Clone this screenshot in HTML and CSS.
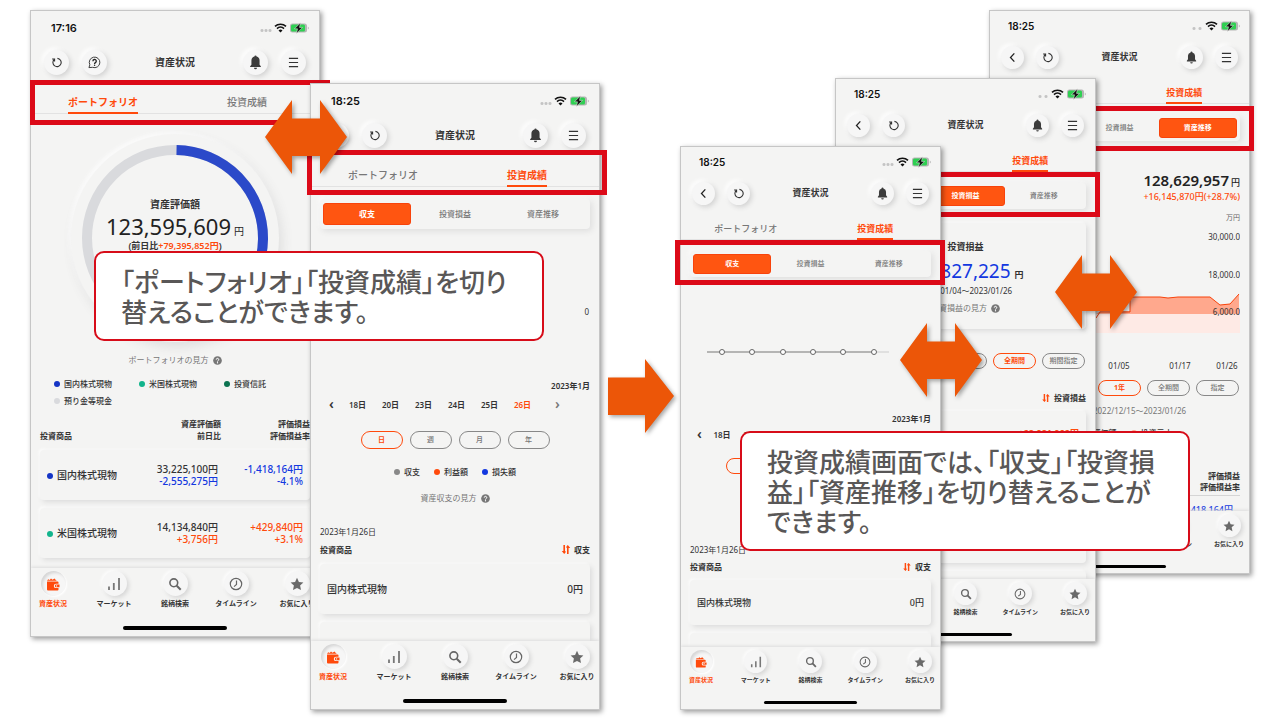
FILE: index.html
```
<!DOCTYPE html>
<html lang="ja">
<head>
  <meta charset="UTF-8">
  <meta name="viewport" content="width=device-width, initial-scale=1">
  <title>資産状況</title>
  <link rel="stylesheet" href="styles.css">
</head>

<body>
  <!-- icons -->
  <svg class="sprite" aria-hidden="true">
    <symbol id="status" viewBox="0 0 50 12">
      <path d="M16 4.400a8 8 0 0 1 11 0M18 6.600a5 5 0 0 1 7 0" fill="none" stroke="#111" stroke-width="1.600"/>
      <path d="M21.500 10.500l-2-2.100a2.800 2.800 0 0 1 4 0z" fill="#111"/>
      <rect x="31" y="1.500" width="17" height="9" rx="2.500" fill="#b5b5b5"/>
      <rect x="32" y="2.500" width="14" height="7" rx="1.500" fill="#2fd052"/>
      <path d="M48.800 4.600v3q1-.5 1-1.500t-1-1.500z" fill="#b5b5b5"/>
      <path d="M41.500 .8l-6 6h3l-1 4.600 6-6h-3z" fill="#111" stroke="#f4f4f3" stroke-width=".5"/>
    </symbol>
    <symbol id="reload" viewBox="0 0 12 12">
      <path d="M1.200 2.200h2.700v2.700M3.600 2.600A4.500 4.500 0 1 0 7 1.500" fill="none" stroke="#333" stroke-width="1.200"/>
    </symbol>
    <symbol id="help" viewBox="0 0 14 14">
      <path d="M1 12.500l1-3A5.700 5.700 0 1 1 5 12.200z" fill="none" stroke="#333" stroke-width="1"/>
      <path d="M5.300 5.600a1.800 1.800 0 1 1 2.700 1.500q-.9.500-.9 1.400" fill="none" stroke="#222" stroke-width="1.400"/>
      <circle cx="7.100" cy="10" r=".8" fill="#222"/>
    </symbol>
    <symbol id="back" viewBox="0 0 12 12">
      <path d="M8 1.500L3.800 6 8 10.500" fill="none" stroke="#222" stroke-width="1.400"/>
    </symbol>
    <symbol id="bell" viewBox="0 0 12 14">
      <path d="M6 .5a1 1 0 0 1 1 1A3.800 3.800 0 0 1 9.800 5.200V9l1.200 1.500v.8H1v-.8L2.200 9V5.200A3.800 3.800 0 0 1 5 1.500a1 1 0 0 1 1-1zM4.600 12h2.800a1.400 1.400 0 0 1-2.800 0z" fill="#3c3c3c"/>
    </symbol>
    <symbol id="menu" viewBox="0 0 12 12">
      <path d="M1 1.500h10M1 6h10M1 10.500h10" stroke="#333" stroke-width="1.200"/>
    </symbol>
    <symbol id="wallet" viewBox="0 0 14 14">
      <path d="M1 4.500h10.500q1 0 1 1v1.200h-2.500a2.200 2.200 0 0 0 0 4.400h2.500v1.400q0 1-1 1h-9.500q-1 0-1-1z" fill="currentColor"/>
      <path d="M1 3.800l1.200-1.600 1.500.8L5 1.500l1.500 1.200 2-1.200 1.300 1.500 1 .8z" fill="currentColor"/>
      <path d="M10.200 7.600h3.300v2.600h-3.300a1.300 1.300 0 0 1 0-2.600z" fill="currentColor"/>
      <circle cx="10.600" cy="8.900" r=".6" fill="#fff"/>
    </symbol>
    <symbol id="bars" viewBox="0 0 14 14">
      <path d="M2 9.500v3.500M6.800 6v7M12 1v12" stroke="#777" stroke-width="1.800"/>
    </symbol>
    <symbol id="search" viewBox="0 0 14 14">
      <circle cx="5.800" cy="5.800" r="3.900" fill="none" stroke="#666" stroke-width="1.600"/>
      <path d="M8.700 8.700l4 4" stroke="#666" stroke-width="2"/>
    </symbol>
    <symbol id="clock" viewBox="0 0 14 14">
      <circle cx="7" cy="7" r="5.700" fill="none" stroke="#666" stroke-width="1.200"/>
      <path d="M7.500 3.500V7.500L5 9.600" fill="none" stroke="#666" stroke-width="1.200"/>
    </symbol>
    <symbol id="star" viewBox="0 0 14 14">
      <path d="M7 .8l1.900 4.200 4.500.5-3.300 3.100.9 4.500L7 10.900l-4 2.200.9-4.500L.6 5.500 5.100 5z" fill="#6a6a6a"/>
    </symbol>
    <symbol id="question" viewBox="0 0 10 10">
      <circle cx="5" cy="5" r="4.800" fill="#777"/>
      <path d="M3.600 4a1.400 1.400 0 1 1 2.100 1.200q-.7.400-.7 1" fill="none" stroke="#fff" stroke-width="1.100"/>
      <circle cx="5" cy="7.500" r=".7" fill="#fff"/>
    </symbol>
    <symbol id="sort" viewBox="0 0 10 10">
      <path d="M3 0v8M7 10V2" stroke="#ff4a0c" stroke-width="1.800"/>
      <path d="M.3 6.800L3 10l1.500-1.600V6.800zM9.700 3.200L7 0 5.500 1.600v1.600z" fill="#ff4a0c"/>
    </symbol>
    <symbol id="swap" viewBox="0 0 82 74">
      <path d="M0 37L27 0v18.500h28V0l27 37-27 37V56H27v18z" fill="#ec5608"/>
    </symbol>
    <symbol id="next" viewBox="0 0 66 74">
      <path d="M0 18.500h37V0l29 37-29 37V56H0z" fill="#ec5608"/>
    </symbol>
  </svg>

  <main class="stage">

    <!-- portfolio -->
    <section class="device device-1">
      <div class="screen">
        <div class="status"><span>17:16</span><i class="dots four"></i><svg><use href="#status"/></svg></div>
        <header class="header">
          <button class="round" aria-label="更新"><svg><use href="#reload"/></svg></button>
          <button class="round" aria-label="ヘルプ"><svg class="lg"><use href="#help"/></svg></button>
          <h1>資産状況</h1>
          <button class="round" aria-label="通知"><svg class="lg"><use href="#bell"/></svg></button>
          <button class="round" aria-label="メニュー"><svg><use href="#menu"/></svg></button>
        </header>
        <nav class="tabs"><a href="#" class="active">ポートフォリオ</a><a href="#">投資成績</a></nav>
        <div class="content">
          <div class="donut">
            <svg viewBox="0 0 208 208">
              <circle cx="104" cy="104" r="88" fill="none" stroke="#d9dadd" stroke-width="10"/>
              <circle cx="104" cy="104" r="88" fill="none" stroke="#2b49c9" stroke-width="10" pathLength="100" stroke-dasharray="38 62" transform="rotate(-89 104 104)"/>
            </svg>
            <div class="donut-text">
              <b>資産評価額</b>
              <p class="amount">123,595,609<small>円</small></p>
              <b class="diff">(前日比<span class="plus">+79,395,852円</span>)</b>
            </div>
          </div>
          <a href="#" class="guide">ポートフォリオの見方<svg><use href="#question"/></svg></a>
          <ul class="legend wide">
            <li class="navy">国内株式現物</li>
            <li class="mint">米国株式現物</li>
            <li class="green">投資信託</li>
            <li class="pale">預り金等現金</li>
          </ul>
          <table class="assets portfolio">
            <thead>
              <tr><th>投資商品</th><th>資産評価額<br>前日比</th><th>評価損益<br>評価損益率</th></tr>
            </thead>
            <tbody>
              <tr>
                <td><span class="name navy">国内株式現物</span></td>
                <td>33,225,100円<br><span class="minus">-2,555,275円</span></td>
                <td class="minus">-1,418,164円<br>-4.1%</td>
              </tr>
              <tr>
                <td><span class="name mint">米国株式現物</span></td>
                <td>14,134,840円<br><span class="plus">+3,756円</span></td>
                <td class="plus">+429,840円<br>+3.1%</td>
              </tr>
            </tbody>
          </table>
        </div>
        <footer class="menu">
          <button class="active"><i><svg><use href="#wallet"/></svg></i>資産状況</button>
          <button><i><svg><use href="#bars"/></svg></i>マーケット</button>
          <button><i><svg><use href="#search"/></svg></i>銘柄検索</button>
          <button><i><svg><use href="#clock"/></svg></i>タイムライン</button>
          <button><i><svg><use href="#star"/></svg></i>お気に入り</button>
        </footer>
      </div>
      <div class="marker"></div>
    </section>

    <!-- income -->
    <section class="device device-2">
      <div class="screen">
        <div class="status"><span>18:25</span><i class="dots"></i><svg><use href="#status"/></svg></div>
        <header class="header">
          <button class="round" aria-label="戻る"><svg><use href="#back"/></svg></button>
          <button class="round" aria-label="更新"><svg><use href="#reload"/></svg></button>
          <h1>資産状況</h1>
          <button class="round" aria-label="通知"><svg class="lg"><use href="#bell"/></svg></button>
          <button class="round" aria-label="メニュー"><svg><use href="#menu"/></svg></button>
        </header>
        <nav class="tabs"><a href="#">ポートフォリオ</a><a href="#" class="active">投資成績</a></nav>
        <div class="content">
          <div class="segment"><button class="active">収支</button><button>投資損益</button><button>資産推移</button></div>
          <svg class="line-chart" viewBox="0 0 270 149">
            <path d="M20 83h180" stroke="#888"/>
            <text x="269" y="86" text-anchor="end">0</text>
          </svg>
          <p class="month">2023年1月</p>
          <div class="days">
            <button>‹</button><button>18日</button><button>20日</button><button>23日</button><button>24日</button><button>25日</button><button class="active">26日</button><button class="off">›</button>
          </div>
          <div class="pills"><button class="active">日</button><button>週</button><button>月</button><button>年</button></div>
          <ul class="legend">
            <li class="gray">収支</li>
            <li class="orange">利益額</li>
            <li class="blue">損失額</li>
          </ul>
          <a href="#" class="guide">資産収支の見方<svg><use href="#question"/></svg></a>
          <p class="date">2023年1月26日</p>
          <table class="assets">
            <thead>
              <tr><th>投資商品</th><th><svg><use href="#sort"/></svg>収支</th></tr>
            </thead>
            <tbody>
              <tr><td>国内株式現物</td><td>0円</td></tr>
              <tr><td></td><td></td></tr>
            </tbody>
          </table>
        </div>
        <footer class="menu">
          <button class="active"><i><svg><use href="#wallet"/></svg></i>資産状況</button>
          <button><i><svg><use href="#bars"/></svg></i>マーケット</button>
          <button><i><svg><use href="#search"/></svg></i>銘柄検索</button>
          <button><i><svg><use href="#clock"/></svg></i>タイムライン</button>
          <button><i><svg><use href="#star"/></svg></i>お気に入り</button>
        </footer>
      </div>
      <div class="marker"></div>
    </section>

    <!-- asset history -->
    <section class="device small device-5">
      <div class="screen">
        <div class="status"><span>18:25</span><i class="dots two"></i><svg><use href="#status"/></svg></div>
        <header class="header">
          <button class="round" aria-label="戻る"><svg><use href="#back"/></svg></button>
          <button class="round" aria-label="更新"><svg><use href="#reload"/></svg></button>
          <h1>資産状況</h1>
          <button class="round" aria-label="通知"><svg class="lg"><use href="#bell"/></svg></button>
          <button class="round" aria-label="メニュー"><svg><use href="#menu"/></svg></button>
        </header>
        <nav class="tabs"><a href="#">ポートフォリオ</a><a href="#" class="active">投資成績</a></nav>
        <div class="content">
          <div class="segment"><button>収支</button><button>投資損益</button><button class="active">資産推移</button></div>
          <div class="total">
            <p class="total-value">128,629,957<small>円</small></p>
            <p class="plus">+16,145,870円(+28.7%)</p>
            <p class="unit">万円</p>
          </div>
          <svg class="area-chart" viewBox="0 0 241 150">
            <path d="M0 90h241v19H0z" fill="#feeae5"/>
            <path d="M0 90h97l4-3h30V73h30l8 1 10-1h32l10 8 10-1 9-10v20z" fill="#ffa88d"/>
            <path d="M97 94l4-6h30V73h30l8 1 10-1h32l10 8 10-1 9-10" fill="none" stroke="#f8430b"/>
            <g class="axis">
              <text x="241" y="16" text-anchor="end">30,000.0</text>
              <text x="241" y="54" text-anchor="end">18,000.0</text>
              <text x="241" y="91" text-anchor="end">6,000.0</text>
              <text x="120" y="145" text-anchor="middle">01/05</text>
              <text x="181" y="145" text-anchor="middle">01/17</text>
              <text x="228" y="145" text-anchor="middle">01/26</text>
            </g>
          </svg>
          <div class="pills"><button>1ヶ月</button><button>3ヶ月</button><button class="active">1年</button><button>全期間</button><button>指定</button></div>
          <p class="range">集計期間：2022/12/15〜2023/01/26</p>
          <ul class="legend"><li class="orange">資産評価額</li><li class="peach">投資元本</li></ul>
          <table class="assets flat">
            <thead>
              <tr><th>投資商品</th><th>評価損益<br>評価損益率</th></tr>
            </thead>
            <tbody>
              <tr><td>国内株式現物</td><td class="minus">-1,418,164円</td></tr>
            </tbody>
          </table>
        </div>
        <footer class="menu">
          <button class="active"><i><svg><use href="#wallet"/></svg></i>資産状況</button>
          <button><i><svg><use href="#bars"/></svg></i>マーケット</button>
          <button><i><svg><use href="#search"/></svg></i>銘柄検索</button>
          <button><i><svg><use href="#clock"/></svg></i>タイムライン</button>
          <button><i><svg><use href="#star"/></svg></i>お気に入り</button>
        </footer>
      </div>
      <div class="marker"></div>
    </section>

    <!-- profit and loss -->
    <section class="device small device-4">
      <div class="screen">
        <div class="status"><span>18:25</span><i class="dots two"></i><svg><use href="#status"/></svg></div>
        <header class="header">
          <button class="round" aria-label="戻る"><svg><use href="#back"/></svg></button>
          <button class="round" aria-label="更新"><svg><use href="#reload"/></svg></button>
          <h1>資産状況</h1>
          <button class="round" aria-label="通知"><svg class="lg"><use href="#bell"/></svg></button>
          <button class="round" aria-label="メニュー"><svg><use href="#menu"/></svg></button>
        </header>
        <nav class="tabs"><a href="#">ポートフォリオ</a><a href="#" class="active">投資成績</a></nav>
        <div class="content">
          <div class="segment"><button>収支</button><button class="active">投資損益</button><button>資産推移</button></div>
          <div class="profit">
            <h2>投資損益</h2>
            <p class="profit-value">-11,827,225<small>円</small></p>
            <p class="period">2022/01/04〜2023/01/26</p>
            <a href="#" class="guide">投資損益の見方<svg><use href="#question"/></svg></a>
          </div>
          <div class="pills"><button>今月</button><button>今年</button><button>1年</button><button class="active">全期間</button><button>期間指定</button></div>
          <table class="assets tall">
            <thead>
              <tr><th>投資商品</th><th><svg><use href="#sort"/></svg>投資損益</th></tr>
            </thead>
            <tbody>
              <tr><td>国内株式現物</td><td class="plus">+28,081,902円</td></tr>
              <tr><td>米国株式現物</td><td></td></tr>
              <tr><td></td><td></td></tr>
            </tbody>
          </table>
        </div>
        <footer class="menu">
          <button class="active"><i><svg><use href="#wallet"/></svg></i>資産状況</button>
          <button><i><svg><use href="#bars"/></svg></i>マーケット</button>
          <button><i><svg><use href="#search"/></svg></i>銘柄検索</button>
          <button><i><svg><use href="#clock"/></svg></i>タイムライン</button>
          <button><i><svg><use href="#star"/></svg></i>お気に入り</button>
        </footer>
      </div>
      <div class="marker"></div>
    </section>

    <!-- income, small -->
    <section class="device small device-3">
      <div class="screen">
        <div class="status"><span>18:25</span><i class="dots"></i><svg><use href="#status"/></svg></div>
        <header class="header">
          <button class="round" aria-label="戻る"><svg><use href="#back"/></svg></button>
          <button class="round" aria-label="更新"><svg><use href="#reload"/></svg></button>
          <h1>資産状況</h1>
          <button class="round" aria-label="通知"><svg class="lg"><use href="#bell"/></svg></button>
          <button class="round" aria-label="メニュー"><svg><use href="#menu"/></svg></button>
        </header>
        <nav class="tabs"><a href="#">ポートフォリオ</a><a href="#" class="active">投資成績</a></nav>
        <div class="content">
          <div class="segment"><button class="active">収支</button><button>投資損益</button><button>資産推移</button></div>
          <svg class="line-chart" viewBox="0 0 241 134">
            <path d="M184 75h15" stroke="#ccc"/>
            <path d="M17 75h167" stroke="#777" stroke-width="1.200"/>
            <g fill="#fff" stroke="#666">
              <circle cx="32" cy="75" r="2.500"/>
              <circle cx="62" cy="75" r="2.500"/>
              <circle cx="93" cy="75" r="2.500"/>
              <circle cx="123" cy="75" r="2.500"/>
              <circle cx="153" cy="75" r="2.500"/>
              <circle cx="184" cy="75" r="2.500"/>
            </g>
          </svg>
          <p class="month">2023年1月</p>
          <div class="days">
            <button>‹</button><button>18日</button><button>20日</button><button>23日</button><button>24日</button><button>25日</button><button class="active">26日</button><button class="off">›</button>
          </div>
          <div class="pills"><button class="active">日</button><button>週</button><button>月</button><button>年</button></div>
          <ul class="legend">
            <li class="gray">収支</li>
            <li class="orange">利益額</li>
            <li class="blue">損失額</li>
          </ul>
          <a href="#" class="guide">資産収支の見方<svg><use href="#question"/></svg></a>
          <p class="date">2023年1月26日</p>
          <table class="assets">
            <thead>
              <tr><th>投資商品</th><th><svg><use href="#sort"/></svg>収支</th></tr>
            </thead>
            <tbody>
              <tr><td>国内株式現物</td><td>0円</td></tr>
              <tr><td></td><td></td></tr>
            </tbody>
          </table>
        </div>
        <footer class="menu">
          <button class="active"><i><svg><use href="#wallet"/></svg></i>資産状況</button>
          <button><i><svg><use href="#bars"/></svg></i>マーケット</button>
          <button><i><svg><use href="#search"/></svg></i>銘柄検索</button>
          <button><i><svg><use href="#clock"/></svg></i>タイムライン</button>
          <button><i><svg><use href="#star"/></svg></i>お気に入り</button>
        </footer>
      </div>
      <div class="marker"></div>
    </section>

    <svg class="arrow arrow-1"><use href="#swap"/></svg>
    <svg class="arrow arrow-2"><use href="#swap"/></svg>
    <svg class="arrow arrow-3"><use href="#swap"/></svg>
    <svg class="arrow arrow-next"><use href="#next"/></svg>

    <p class="callout callout-1">「ポートフォリオ」「投資成績」を切り<br>替えることができます。</p>
    <p class="callout callout-2">投資成績画面では、「収支」「投資損<br>益」「資産推移」を切り替えることが<br>できます。</p>
  </main>
</body>
</html>
```
FILE: styles.css
```
* {
  box-sizing: border-box;
}

body {
  margin: 0;
  background: #fff;
  color: #333;
  font-family: "Noto Sans", "Noto Sans CJK JP", sans-serif;
}

h1, h2, p, ul {
  margin: 0;
  padding: 0;
}

a {
  color: inherit;
  text-decoration: none;
}

button {
  padding: 0;
  border: none;
  background: none;
  color: inherit;
  font: inherit;
  white-space: nowrap;
  cursor: pointer;
}

small {
  line-height: 1;
}

svg {
  display: block;
}

.sprite {
  position: absolute;
  width: 0;
  height: 0;
}

.stage {
  position: relative;
  min-height: 100vh;
  overflow: hidden;
}

/* phones lie over each other on the stage */
.device {
  position: absolute;
  width: 290px;
  font-size: 8px;
  line-height: 12px;
}
.device.small {
  width: 261px;
}
.device-1 { left: 30px; top: 10px; }
.device-2 { left: 310px; top: 83px; }
.device-3 { left: 680px; top: 146px; }
.device-4 { left: 835px; top: 78px; }
.device-5 { left: 989px; top: 10px; }

.screen {
  display: flex;
  flex-direction: column;
  aspect-ratio: 290 / 627;
  overflow: hidden;
  border: 1px solid #c6c6c6;
  background: #f4f4f3;
  box-shadow: 2px 2px 5px rgba(0, 0, 0, 0.4);
}

.marker {
  position: absolute;
  left: -5px;
  right: -4px;
  top: 94px;
  height: 45px;
  border: 5px solid #dc0a18;
}
.device-1 .marker { left: 0; right: -10px; top: 70px; }
.device-2 .marker { left: -3px; right: -7px; top: 67px; }
.device-5 .marker { top: 96px; }

/* status bar */
.status {
  display: flex;
  align-items: center;
  flex: none;
  height: 33px;
  padding: 0 10px 0 20px;
  color: #111;
  font: 600 11px/14px Inter, sans-serif;
}
.status svg {
  width: 50px;
  height: 12px;
  margin-left: -13px;
}
.dots {
  width: 12px;
  height: 3px;
  margin: 6px 0 0 auto;
  background: radial-gradient(circle, #c4c4c4 1px, transparent 2px) 0 0 / 4px 3px;
}
.dots.two {
  background-size: 6px 3px;
}
.small .status {
  height: 29px;
  padding: 0 9px 0 18px;
  font-size: 10px;
}

/* header */
.header {
  display: flex;
  align-items: center;
  flex: none;
  height: 36px;
  gap: 13px;
  padding: 0 13px;
}
.header h1 {
  flex: 1;
  text-align: center;
  font-size: 10px;
  font-weight: 600;
}
.round {
  display: grid;
  place-items: center;
  width: 25px;
  height: 25px;
  border-radius: 50%;
  background: #f6f6f6;
  box-shadow: 2px 2px 5px #d2d2d2, -2px -2px 4px #fff;
}
.round svg {
  width: 11px;
  height: 13px;
}
.round svg.lg {
  width: 13px;
  height: 15px;
}
.small .header {
  height: 34px;
  gap: 12px;
  padding: 0 11px;
}
.small .header h1 {
  font-size: 9px;
}
.small .round {
  width: 23px;
  height: 23px;
}
.small .round svg.lg {
  width: 13px;
  height: 13px;
}

/* tabs */
.tabs {
  display: grid;
  grid-template-columns: 1fr 1fr;
  justify-items: center;
  align-items: end;
  flex: none;
  height: 34px;
  border-bottom: 1px solid #e2e2e2;
  color: #777;
  font-size: 10px;
  font-weight: 500;
  line-height: 12px;
}
.tabs a {
  padding-bottom: 4px;
  margin-bottom: -1px;
  border-bottom: 2px solid transparent;
}
.tabs a.active {
  border-color: #ff4a0c;
  color: #ff4a0c;
  font-weight: 700;
}
.small .tabs {
  height: 30px;
  font-size: 9px;
  line-height: 11px;
}

.content {
  flex: 1;
  min-height: 0;
  overflow: hidden;
  padding: 0 9px;
}

/* segmented switch */
.segment {
  display: grid;
  grid-template-columns: repeat(3, 1fr);
  height: 30px;
  margin-top: 12px;
  padding: 4px 3px;
  border-radius: 4px;
  box-shadow: 2px 2px 6px #dcdcdc, -1px -1px 4px #fff;
  color: #777;
  font-weight: 500;
}
.segment .active {
  border: 1px solid #f8430b;
  border-radius: 3px;
  background: #ff5511;
  color: #fff;
  font-weight: 700;
}
.small .segment {
  height: 26px;
  margin-top: 11px;
  padding: 3px;
  font-size: 7px;
}

/* donut */
.donut {
  display: grid;
  place-items: center;
  width: 208px;
  margin: 20px auto 0;
  border-radius: 50%;
  box-shadow: 3px 5px 12px #dedede, -2px -2px 4px #fff;
}
.donut svg,
.donut-text {
  grid-area: 1 / 1;
}
.donut svg {
  width: 100%;
}
.donut-text {
  margin-bottom: 28px;
  text-align: center;
  font-size: 10px;
}
.donut-text b {
  font-weight: 600;
}
.amount {
  color: #222;
  font-size: 22px;
  line-height: 32px;
}
.amount small {
  margin-left: 3px;
  font-size: 10px;
}
.donut-text .diff {
  display: block;
  font-size: 9px;
  line-height: 8px;
}
.plus { color: #ff4a0c; }
.minus { color: #1338e0; }

.guide {
  display: flex;
  justify-content: center;
  align-items: center;
  gap: 4px;
  margin-top: 10px;
  color: #777;
  line-height: 16px;
}
.guide svg {
  width: 9px;
  height: 9px;
}

/* legends */
.legend {
  display: flex;
  justify-content: center;
  gap: 14px;
  margin-top: 15px;
  list-style: none;
  font-weight: 500;
  line-height: 16px;
}
.legend.wide {
  display: grid;
  grid-template-columns: repeat(3, 85px);
  gap: 0;
  justify-content: start;
  margin: 7px 0 0 14px;
  line-height: 17px;
}
.legend li::before,
.name::before {
  content: "";
  display: inline-block;
  width: 6px;
  height: 6px;
  margin-right: 4px;
  border-radius: 50%;
  background: var(--dot);
}
.navy { --dot: #1535c5; }
.mint { --dot: #12b48c; }
.green { --dot: #0c7350; }
.pale { --dot: #d9dadd; }
.gray { --dot: #888; }
.orange { --dot: #ff4a0c; }
.blue { --dot: #1338e0; }
.peach { --dot: #ffa88d; }

/* asset tables */
.assets {
  width: 100%;
  border-spacing: 0 8px;
}
.assets th {
  padding: 0;
  text-align: right;
  vertical-align: bottom;
  font-weight: 600;
}
.assets th:first-child,
.assets td:first-child {
  text-align: left;
}
.assets th svg {
  display: inline-block;
  width: 10px;
  height: 9px;
  margin: -2px 3px 0 0;
  vertical-align: middle;
}
.assets tbody tr {
  height: 50px;
  border-radius: 4px;
  box-shadow: 2px 2px 5px #dcdcdc, -1px -1px 3px #fff;
}
.assets td {
  padding: 0 7px;
  text-align: right;
  font-size: 10px;
  font-weight: 500;
}
.portfolio {
  margin-top: 1px;
}
.portfolio th:nth-child(2) {
  width: 90px;
}
.portfolio th:nth-child(3) {
  width: 89px;
}
.portfolio td:nth-child(2) {
  padding-right: 3px;
}

/* income */
.line-chart,
.area-chart {
  width: 100%;
}
.line-chart text,
.axis {
  fill: #333;
  font-size: 8px;
}
.month {
  text-align: right;
  font-weight: 600;
  line-height: 16px;
}
.days {
  display: grid;
  grid-template-columns: 19px repeat(6, 33px) 37px;
  height: 22px;
  margin-left: 2px;
  font-weight: 600;
}
.days button:first-child,
.days .off {
  padding-bottom: 3px;
  font-size: 14px;
}
.days .active {
  color: #ff4a0c;
}
.days .off {
  color: #777;
}
.pills {
  display: flex;
  justify-content: center;
  gap: 7px;
  margin-top: 15px;
}
.pills button {
  width: 42px;
  height: 18px;
  border: 1px solid #888;
  border-radius: 9px;
  color: #777;
  font-size: 7px;
  font-weight: 500;
}
.pills .active {
  border-color: #ff4a0c;
  color: #ff4a0c;
  font-weight: 700;
}
.date {
  margin-top: 20px;
}
.date + .assets {
  margin-top: -2px;
}

.small .days {
  grid-template-columns: 15px repeat(6, 30px) 30px;
  height: 16px;
}
.small .pills {
  gap: 6px;
}
.small .pills button {
  width: 43px;
  height: 16px;
}
.device-3 .pills button {
  width: 38px;
}
.small .legend {
  margin-top: 14px;
  line-height: 14px;
}
.small .guide {
  margin-top: 10px;
  line-height: 14px;
}
.small .date {
  margin-top: 18px;
}
.small .assets td {
  font-size: 9px;
}
.small .assets th {
  line-height: 10px;
}
.small .assets th svg {
  height: 8px;
}
.small .assets tbody tr {
  height: 45px;
}

/* profit and loss */
.profit {
  margin-top: 14px;
  padding: 18px 0 14px;
  border-radius: 4px;
  box-shadow: 2px 2px 5px #dcdcdc, -1px -1px 3px #fff;
  text-align: center;
}
.profit h2 {
  font-size: 9px;
  font-weight: 600;
  line-height: 12px;
}
.profit-value {
  margin-top: 5px;
  color: #1338e0;
  font-size: 19px;
  line-height: 26px;
}
.profit-value small {
  margin-left: 4px;
  color: #333;
  font-size: 9px;
  font-weight: 600;
}
.profit .period {
  line-height: 14px;
}
.profit .guide {
  margin-top: 3px;
}
.device-4 .pills {
  margin-top: 24px;
}
.tall {
  margin-top: 16px;
}
.small .tall tbody tr {
  height: 72px;
}
.tall tbody td {
  padding-top: 16px;
  vertical-align: top;
}
.tall .plus {
  font-weight: 700;
}

/* asset history */
.total {
  margin-top: 28px;
  text-align: right;
}
.total-value {
  color: #222;
  font-size: 15px;
  font-weight: 600;
  line-height: 22px;
}
.total-value small {
  margin-left: 2px;
  font-size: 9px;
  font-weight: 500;
}
.total .plus {
  font-size: 9px;
  font-weight: 500;
  line-height: 12px;
}
.unit {
  margin-top: 9px;
  color: #666;
  font-size: 7px;
}
.device-5 .pills {
  margin-top: 6px;
}
.range {
  margin-top: 8px;
  color: #777;
  text-align: center;
  line-height: 14px;
}
.device-5 .legend {
  margin-top: 8px;
}
.assets.flat {
  margin-top: 30px;
  border-spacing: 0;
}
.small .flat th {
  padding-bottom: 3px;
  border-bottom: 1px solid #d5d5d5;
  line-height: 11px;
}
.small .flat tbody tr {
  height: 28px;
  box-shadow: none;
}

/* bottom menu */
.menu {
  display: flex;
  flex-wrap: wrap;
  justify-content: space-between;
  flex: none;
  height: 68px;
  padding-top: 3px;
  background: #f4f4f3;
  box-shadow: 0 -1px 3px #dcdcdc;
}
.menu button {
  display: flex;
  flex-direction: column;
  align-items: center;
  gap: 3px;
  width: 44px;
  font-size: 7px;
  font-weight: 600;
  line-height: 10px;
}
.menu i {
  display: grid;
  place-items: center;
  width: 25px;
  height: 25px;
  border-radius: 50%;
  background: #f6f6f6;
  box-shadow: 2px 2px 4px #d6d6d6, -1px -1px 3px #fff;
}
.menu svg {
  width: 14px;
  height: 14px;
}
.menu .active {
  color: #ff4a0c;
}
.menu .active i {
  box-shadow: inset 2px 2px 3px #d6d6d6, 1px 1px 2px #fff;
}
.menu::after {
  content: "";
  width: 104px;
  height: 4px;
  margin: 11px auto 0;
  border-radius: 2px;
  background: #000;
}
.small .menu {
  height: 62px;
}
.small .menu button {
  gap: 2px;
  width: 40px;
  font-size: 6px;
}
.small .menu i {
  width: 23px;
  height: 23px;
}
.small .menu svg {
  width: 12px;
  height: 12px;
}
.small .menu::after {
  width: 93px;
  height: 3px;
}

/* arrows and callouts */
.arrow {
  position: absolute;
  width: 82px;
  height: 74px;
  filter: drop-shadow(2px 2px 2px rgba(0, 0, 0, 0.35));
}
.arrow-1 { left: 265px; top: 100px; }
.arrow-2 { left: 900px; top: 323px; }
.arrow-3 { left: 1055px; top: 255px; }
.arrow-next { left: 608px; top: 359px; width: 66px; }

.callout {
  position: absolute;
  width: 450px;
  padding: 13px 0 13px 25px;
  border: 2px solid #d70c19;
  border-radius: 10px;
  background: #fff;
  color: #595757;
  font-family: "Noto Sans CJK JP", sans-serif;
  font-size: 26px;
  font-weight: 500;
  line-height: 30px;
  font-feature-settings: "palt";
  white-space: nowrap;
}
.callout-1 { left: 94px; top: 251px; }
.callout-2 { left: 740px; top: 431px; }
```
